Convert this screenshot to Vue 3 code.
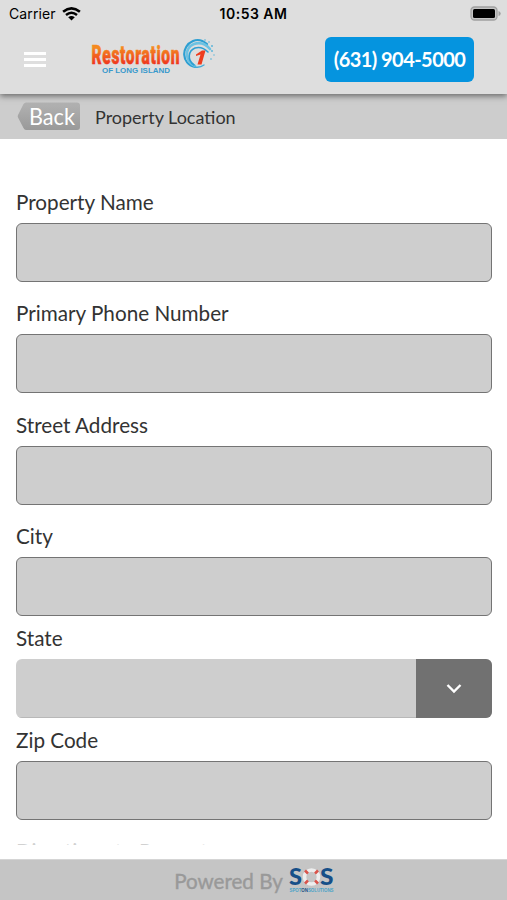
<script setup>
import { ref } from 'vue'

const fields = ref([
    { label: 'Property Name', type: 'text', value: '' },
    { label: 'Primary Phone Number', type: 'tel', value: '' },
    { label: 'Street Address', type: 'text', value: '' },
    { label: 'City', type: 'text', value: '' },
    { label: 'State', type: 'select', value: '' },
    { label: 'Zip Code', type: 'text', value: '' }
])
</script>

<template>
    <div class="app">
        <header>
            <div class="status">
                <div class="carrier">
                    <span>Carrier</span>
                    <svg width="19" height="14" viewBox="0 0 19 14" fill="none" stroke="#000">
                        <path d="M1.1 4.8Q9.5-2 17.9 4.8" stroke-width="2.6" />
                        <path d="M4 8Q9.5 3.5 15 8" stroke-width="2.5" />
                        <path d="M9.5 13.6L6.2 10.3Q9.5 7.6 12.8 10.3Z" fill="#000" stroke="none" />
                    </svg>
                </div>
                <strong class="time">10:53 AM</strong>
                <svg class="battery" width="31" height="15" viewBox="0 0 31 15">
                    <rect x="1" y="1" width="26" height="13" rx="3.5" fill="#c5c5c5" stroke="#a0a0a0" stroke-width="1.3" />
                    <rect x="3" y="3" width="22" height="9" rx="1.5" fill="#000" />
                    <path d="M28.5 5Q30.7 5.5 30.7 7.5T28.5 10Z" fill="#a0a0a0" />
                </svg>
            </div>
            <div class="bar">
                <button class="menu" aria-label="Menu">
                    <span></span><span></span><span></span>
                </button>
                <svg class="logo" width="126" height="40" viewBox="0 0 126 40">
                    <defs>
                        <linearGradient id="fire" x1="0" y1="0" x2="0" y2="1">
                            <stop offset="0.25" stop-color="#f58a1f" />
                            <stop offset="0.85" stop-color="#ee2f1d" />
                        </linearGradient>
                    </defs>
                    <g transform="translate(1.5 27) scale(0.8 1.3)">
                        <text class="brand" textLength="110" fill="url(#fire)" stroke="url(#fire)">Restoration</text>
                    </g>
                    <text class="region" x="12" y="36" textLength="68" lengthAdjust="spacingAndGlyphs">OF LONG ISLAND</text>
                    <g fill="none" stroke-linecap="round">
                        <path d="M105 30C91 27 91 9 103 4Q110 1 117 7" stroke="#2d9fd2" stroke-width="2.200" />
                        <path d="M105 29C95 25 94 11 104 7Q113 4 120 12" stroke="#6cc2e2" stroke-width="2.600" />
                        <path d="M104 28C97 23 98 14 105 11Q112 9 118 15" stroke="#2d9fd2" stroke-width="1.600" />
                        <path d="M105 30Q110 31 114 28" stroke="#43acd8" stroke-width="1.300" />
                    </g>
                    <g fill="#51b1d9">
                        <circle cx="115" cy="3" r="0.800" />
                        <circle cx="119" cy="5" r="0.800" />
                        <circle cx="122" cy="9" r="0.900" />
                        <circle cx="122" cy="14" r="0.900" />
                        <circle cx="124" cy="18" r="0.700" />
                        <circle cx="121" cy="22" r="0.800" />
                    </g>
                    <path d="M106 17.500L112 13.500H115.500L111.500 27.500H107.500L110.500 17.500L106 19Z" fill="#ee3c1e" />
                </svg>
                <a class="phone" href="tel:6319045000">(631) 904-5000</a>
            </div>
        </header>
        <nav>
            <button class="back">
                <svg width="64" height="29" viewBox="0 0 64 29">
                    <defs>
                        <linearGradient id="grey" x1="0" y1="0" x2="0" y2="1">
                            <stop offset="0" stop-color="#b2b2b2" />
                            <stop offset="1" stop-color="#999" />
                        </linearGradient>
                    </defs>
                    <path d="M9 0.500H60Q63 0.500 63 3.500V25Q63 28 60 28H9Q7.500 28 6.500 26L1 15.500Q0.300 14 1 13L6.500 2Q7.500 0.500 9 0.500Z" fill="url(#grey)" />
                    <text x="12" y="23" textLength="46" lengthAdjust="spacingAndGlyphs">Back</text>
                </svg>
            </button>
            <h1>Property Location</h1>
        </nav>
        <main>
            <div v-for="field in fields" :key="field.label" class="field" :class="{ state: field.type === 'select' }">
                <label>{{ field.label }}</label>
                <div v-if="field.type === 'select'" class="select">
                    <span>{{ field.value }}</span>
                    <button aria-label="Choose state">
                        <svg width="16" height="11" viewBox="0 0 16 11" fill="none" stroke="#fff" stroke-width="2.400">
                            <path d="M1.500 2L8 8.500L14.500 2" />
                        </svg>
                    </button>
                </div>
                <input v-else v-model="field.value" :type="field.type">
            </div>
            <label class="next">Directions to Property</label>
        </main>
        <footer>
            <span>Powered By</span>
            <svg width="46" height="28" viewBox="0 0 46 28">
                <text class="sos" x="0" y="18" textLength="13" lengthAdjust="spacingAndGlyphs">S</text>
                <text class="sos" x="31" y="18" textLength="13.500" lengthAdjust="spacingAndGlyphs">S</text>
                <circle cx="22.500" cy="10" r="7" fill="none" stroke="#ededed" stroke-width="3.600" />
                <path d="M16 3.500L19 6.500M29 3.500L26 6.500M16 16.500L19 13.500M29 16.500L26 13.500" stroke="#d9534a" stroke-width="2.600" />
                <text class="tiny" x="0.500" y="25" textLength="44" lengthAdjust="spacingAndGlyphs">SPOT<tspan>ON</tspan>SOLUTIONS</text>
            </svg>
        </footer>
    </div>
</template>

<style>
body {
    margin: 0;
    overflow: hidden;
}
</style>

<style scoped>
.app {
    height: 900px;
    display: flex;
    flex-direction: column;
    overflow: hidden;
    font-family: Lato, sans-serif;
    color: #333;
    background-color: white;
}

button {
    padding: 0;
    border: none;
    background: none;
}

header {
    position: relative;
    height: 94px;
    flex-shrink: 0;
    background-color: #dedede;
    box-shadow: 0 2px 6px rgba(0, 0, 0, 0.5);
    z-index: 1;
}

.status {
    height: 27px;
    padding: 0 6px 0 9px;
    display: grid;
    grid-template-columns: 1fr auto 1fr;
    align-items: center;
    box-sizing: border-box;
    font-family: Inter, sans-serif;
    font-size: 14px;
    color: black;
}

.carrier {
    display: flex;
    align-items: center;
    gap: 6px;
    letter-spacing: 0.1px;
}

.time {
    margin-left: -3px;
    font-weight: 600;
    letter-spacing: 0.5px;
}

.battery {
    justify-self: end;
}

.bar {
    height: 67px;
    padding: 0 33px 0 24px;
    display: flex;
    align-items: center;
    box-sizing: border-box;
}

.menu {
    width: 22px;
    margin-top: -2px;
    display: flex;
    flex-direction: column;
    gap: 3px;

    span {
        height: 3px;
        background-color: white;
    }
}

.logo {
    margin: -7px 0 0 44px;
}

.brand {
    font-family: Roboto, sans-serif;
    font-size: 19.5px;
    font-weight: 900;
    stroke-width: 0.4px;
}

.region {
    font-family: "Liberation Sans", sans-serif;
    font-size: 6.5px;
    font-weight: bold;
    fill: #3899cc;
}

.phone {
    width: 149px;
    height: 45px;
    margin: -2px 0 0 auto;
    padding-bottom: 1px;
    display: flex;
    align-items: center;
    justify-content: center;
    box-sizing: border-box;
    border-radius: 6px;
    font-size: 20px;
    font-weight: bold;
    letter-spacing: -0.55px;
    color: white;
    text-decoration: none;
    background-color: #0594df;
}

nav {
    height: 45px;
    padding-left: 17px;
    display: flex;
    flex-shrink: 0;
    align-items: center;
    gap: 14px;
    background-color: #cdcdcd;

    h1 {
        margin: 1px 0 0;
        font-size: 18px;
        font-weight: normal;
    }
}

.back svg {
    display: block;

    text {
        font-family: Lato, sans-serif;
        font-size: 23px;
        fill: white;
    }
}

main {
    height: 706px;
    padding: 51px 15px 0 16px;
    flex-shrink: 0;
    box-sizing: border-box;
    overflow: hidden;
}

label {
    display: block;
    font-size: 20.7px;
    line-height: 24px;
}

.field {
    height: 111.3px;

    label {
        height: 33px;
    }

    input {
        width: 100%;
        height: 59px;
        padding: 0 14px;
        display: block;
        box-sizing: border-box;
        border: 1.5px solid #747474;
        border-radius: 6px;
        outline: none;
        font: inherit;
        font-size: 20px;
        background-color: #cecece;
    }
}

.state {
    height: 102px;
    margin-top: -9px;
}

.select {
    height: 59px;
    display: flex;
    border-radius: 6px;
    overflow: hidden;
    background-color: #cecece;

    span {
        flex: 1;
        border-bottom: 1px solid #b8b8b8;
    }

    button {
        width: 76px;
        display: flex;
        align-items: center;
        justify-content: center;
        background-color: #717171;
    }
}

.next {
    margin-top: -0.3px;
    opacity: 0.22;
}

footer {
    margin-top: 14px;
    padding-left: 2px;
    display: flex;
    flex: 1;
    align-items: center;
    justify-content: center;
    gap: 6px;
    border-top: 1px solid #d5d5d5;
    background-color: #c5c5c5;

    span {
        margin-top: 2px;
        font-size: 20.6px;
        color: #999;
        -webkit-text-stroke: 0.4px #999;
    }

    svg {
        margin-top: 1px;
        overflow: visible;
    }
}

.sos {
    font-family: Lato, sans-serif;
    font-size: 23px;
    font-weight: 900;
    fill: #164f88;
}

.tiny {
    font-family: "Liberation Sans", sans-serif;
    font-size: 5px;
    font-weight: bold;
    fill: #4ba3c7;

    tspan {
        fill: #174d83;
    }
}
</style>
